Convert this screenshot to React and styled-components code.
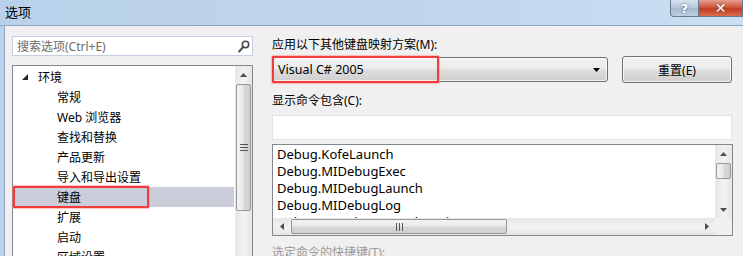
import React from 'react'
import styled, { createGlobalStyle } from 'styled-components'

const GlobalStyle = createGlobalStyle`
  html, body {
    margin: 0;
    padding: 0;
    background: #f0f0f0;
  }
  body {
    font-family: "Noto Sans", "Noto Sans CJK SC", sans-serif;
    font-size: 12px;
    color: #000;
  }
`

const FONT = `"Noto Sans", "Noto Sans CJK SC", sans-serif`

const Window = styled.div`
  width: 743px;
  height: 256px;
  overflow: hidden;
  display: flex;
  flex-direction: column;
  background: linear-gradient(90deg, #b9d1ea 0%, #c0d6ec 60%, #cadff2 100%);
`

const TitleBar = styled.div`
  height: 25px;
  flex: none;
  display: flex;
  align-items: flex-start;
  justify-content: space-between;
  border-bottom: 1px solid #8fa4bd;
`

const Title = styled.div`
  font-family: "Noto Sans CJK SC", sans-serif;
  font-size: 13px;
  line-height: 17px;
  padding: 3px 0 0 5px;
  color: #000;
`

const Captions = styled.div`
  display: flex;
  height: 17px;
`

const CaptionButton = styled.div`
  height: 16px;
  width: ${p => p.$width}px;
  display: flex;
  align-items: center;
  justify-content: center;
  border: 1px solid #6a7a8e;
  border-top: none;
  color: #fff;
  font-family: "DejaVu Sans", sans-serif;
  font-weight: bold;
  font-size: ${p => p.$danger ? 14 : 13}px;
  background: ${p => p.$danger
    ? 'linear-gradient(180deg, #e3a08f 0%, #d0573f 45%, #c23a1f 55%, #d86d51 100%)'
    : 'linear-gradient(180deg, #d6e2ee 0%, #b9c9db 45%, #a5b8cd 55%, #bfd0e2 100%)'};
  border-radius: ${p => p.$first ? '0 0 0 4px' : '0'};
  border-left: ${p => p.$first ? '1px solid #6a7a8e' : 'none'};
  text-shadow: 0 0 2px #3a4a60;
`

const Body = styled.div`
  flex: 1;
  margin-left: 4px;
  border-left: 1px solid #8fa4bd;
  background: #f0f0f0;
  display: flex;
  gap: 19px;
  padding: 10px 10px 0 7px;
  min-height: 0;
`

const LeftPane = styled.div`
  width: 241px;
  flex: none;
  display: flex;
  flex-direction: column;
  gap: 9px;
`

const SearchBox = styled.div`
  height: 20px;
  flex: none;
  box-sizing: border-box;
  border: 1px solid #c5cde0;
  background: #fff;
  display: flex;
  align-items: center;
  justify-content: space-between;
  padding: 0 2px 0 4px;
`

const Placeholder = styled.span`
  color: #6d6d6d;
  font-size: 12px;
`

const TreeBox = styled.div`
  flex: 1;
  border: 1px solid #828790;
  border-bottom: none;
  background: #fff;
  display: flex;
`

const TreeList = styled.div`
  flex: 1;
  padding: 1px 1px 0 1px;
  display: flex;
  flex-direction: column;
`

const TreeRow = styled.div`
  position: relative;
  height: 20px;
  flex: none;
  display: flex;
  align-items: center;
  padding-left: ${p => p.$level === 0 ? 8 : 43}px;
  background: ${p => p.$selected ? '#cbcdda' : 'transparent'};
  font-family: ${FONT};
  white-space: nowrap;
`

const Expander = styled.span`
  width: 16px;
  display: inline-flex;
  align-items: center;
  justify-content: flex-start;
`

const RedMark = styled.div`
  position: absolute;
  left: ${p => p.$left}px;
  top: ${p => p.$top}px;
  width: ${p => p.$width}px;
  height: ${p => p.$height}px;
  box-sizing: border-box;
  border: 2px solid #f23b3b;
  border-radius: 1px;
  box-shadow: 0 0 1px 1px rgba(255, 120, 120, 0.45);
  pointer-events: none;
`

const VScroll = styled.div`
  width: 17px;
  flex: none;
  display: flex;
  flex-direction: column;
  align-items: center;
  background: linear-gradient(90deg, #e6e6e6, #f2f2f2 50%, #e6e6e6);
`

const HScroll = styled.div`
  height: 17px;
  display: flex;
  align-items: center;
  background: linear-gradient(180deg, #e6e6e6, #f2f2f2 50%, #e6e6e6);
`

const ArrowCell = styled.div`
  width: ${p => p.$horizontal ? 17 : 15}px;
  height: ${p => p.$horizontal ? 15 : 17}px;
  flex: none;
  display: flex;
  align-items: center;
  justify-content: center;
`

const Thumb = styled.div`
  flex: none;
  box-sizing: border-box;
  border: 1px solid #979797;
  border-radius: 2px;
  display: flex;
  align-items: center;
  justify-content: center;
  width: ${p => p.$horizontal ? `${p.$size}px` : '15px'};
  height: ${p => p.$horizontal ? '15px' : `${p.$size}px`};
  margin: ${p => p.$horizontal ? '0 0 0 1px' : '1px 0 0 0'};
  background: ${p => p.$horizontal
    ? 'linear-gradient(180deg, #f3f3f3 0%, #e9e9e9 45%, #d8d8d8 55%, #cfcfcf 100%)'
    : 'linear-gradient(90deg, #f3f3f3 0%, #e9e9e9 45%, #d8d8d8 55%, #cfcfcf 100%)'};
`

const Track = styled.div`
  flex: 1;
`

const RightPane = styled.div`
  width: 461px;
  flex: none;
  display: flex;
  flex-direction: column;
`

const FieldLabel = styled.div`
  flex: none;
  height: 18px;
  line-height: 18px;
  margin-top: ${p => p.$gap || 0}px;
  color: ${p => p.$disabled ? '#9a9a9a' : '#000'};
  font-family: ${FONT};
  white-space: nowrap;
`

const ComboRow = styled.div`
  flex: none;
  display: flex;
  align-items: center;
  gap: 14px;
  margin-top: 2px;
  height: 27px;
`

const chrome = `
  box-sizing: border-box;
  border: 1px solid #707070;
  border-radius: 3px;
  background: linear-gradient(180deg, #f2f2f2 0%, #ebebeb 48%, #dddddd 52%, #cfcfcf 100%);
  box-shadow: inset 0 0 0 1px rgba(255,255,255,0.7);
`

const Combo = styled.div`
  ${chrome}
  position: relative;
  width: 336px;
  height: 25px;
  display: flex;
  align-items: center;
  justify-content: space-between;
  padding: 0 7px 0 5px;
  font-family: ${FONT};
  font-size: 12.5px;
`

const Button = styled.div`
  ${chrome}
  width: 110px;
  height: 27px;
  display: flex;
  align-items: center;
  justify-content: center;
  font-family: ${FONT};
`

const TextInput = styled.div`
  flex: none;
  margin-top: 5px;
  height: 25px;
  width: 460px;
  box-sizing: border-box;
  background: #fff;
  border: 1px solid #e2e3ea;
  border-bottom-color: #dfe3ea;
`

const ListBox = styled.div`
  flex: none;
  margin-top: 4px;
  height: 92px;
  box-sizing: border-box;
  border: 1px solid #828790;
  background: #fff;
  display: grid;
  grid-template-columns: 1fr 17px;
  grid-template-rows: 1fr 17px;
`

const ListItems = styled.div`
  padding: 1px 0 0 4px;
  overflow: hidden;
`

const ListItem = styled.div`
  height: 17px;
  line-height: 17px;
  font-family: ${FONT};
  font-size: 13px;
  white-space: nowrap;
`

const Corner = styled.div`
  background: #f0f0f0;
`

const Tri = ({ dir, color = '#4d4d4d' }) => {
  const pts = {
    up: '0,4 3.5,0 7,4',
    down: '0,0 7,0 3.5,4',
    left: '4,0 4,7 0,3.5',
    right: '0,0 0,7 4,3.5',
  }[dir]
  const horizontal = dir === 'left' || dir === 'right'
  return (
    <svg width={horizontal ? 4 : 7} height={horizontal ? 7 : 4} viewBox={horizontal ? '0 0 4 7' : '0 0 7 4'}>
      <polygon points={pts} fill={color} />
    </svg>
  )
}

const Grip = ({ horizontal }) => (
  <svg width={horizontal ? 7 : 8} height={horizontal ? 8 : 7}>
    {[0, 3, 6].map(o => horizontal
      ? <rect key={o} x={o} y={0} width={1} height={8} fill="#555" />
      : <rect key={o} x={0} y={o} width={8} height={1} fill="#555" />)}
  </svg>
)

const SearchIcon = () => (
  <svg width="12" height="13" viewBox="0 0 12 13">
    <circle cx="7.5" cy="4.5" r="3.2" fill="none" stroke="#4a4a4a" strokeWidth="1.6" />
    <line x1="5.2" y1="7" x2="1.2" y2="11.5" stroke="#4a4a4a" strokeWidth="2" strokeLinecap="round" />
  </svg>
)

const ExpandedGlyph = () => (
  <svg width="6" height="6" viewBox="0 0 6 6">
    <polygon points="6,0 6,6 0,6" fill="#262626" />
  </svg>
)

const treeItems = [
  { label: '环境', level: 0 },
  { label: '常规', level: 1 },
  { label: 'Web 浏览器', level: 1 },
  { label: '查找和替换', level: 1 },
  { label: '产品更新', level: 1 },
  { label: '导入和导出设置', level: 1 },
  { label: '键盘', level: 1, selected: true },
  { label: '扩展', level: 1 },
  { label: '启动', level: 1 },
  { label: '区域设置', level: 1 },
]

const commands = [
  'Debug.KofeLaunch',
  'Debug.MIDebugExec',
  'Debug.MIDebugLaunch',
  'Debug.MIDebugLog',
  'Debug.MIDebugLaunchOptions',
]

export default function App() {
  return (
    <>
      <GlobalStyle />
      <Window>
        <TitleBar>
          <Title>选项</Title>
          <Captions>
            <CaptionButton $width={27} $first>?</CaptionButton>
            <CaptionButton $width={43} $danger>✕</CaptionButton>
          </Captions>
        </TitleBar>

        <Body>
          <LeftPane>
            <SearchBox>
              <Placeholder>搜索选项(Ctrl+E)</Placeholder>
              <SearchIcon />
            </SearchBox>
            <TreeBox>
              <TreeList>
                {treeItems.map(item => (
                  <TreeRow key={item.label} $level={item.level} $selected={item.selected}>
                    {item.level === 0 && <Expander><ExpandedGlyph /></Expander>}
                    {item.label}
                    {item.selected && <RedMark $left={-1} $top={-1} $width={136} $height={22} />}
                  </TreeRow>
                ))}
              </TreeList>
              <VScroll>
                <ArrowCell><Tri dir="up" /></ArrowCell>
                <Thumb $size={127}><Grip /></Thumb>
                <Track />
              </VScroll>
            </TreeBox>
          </LeftPane>

          <RightPane>
            <FieldLabel>应用以下其他键盘映射方案(M):</FieldLabel>
            <ComboRow>
              <Combo>
                <span>Visual C# 2005</span>
                <Tri dir="down" color="#000" />
                <RedMark $left={-1} $top={-2} $width={167} $height={27} />
              </Combo>
              <Button>重置(E)</Button>
            </ComboRow>
            <FieldLabel $gap={9}>显示命令包含(C):</FieldLabel>
            <TextInput />
            <ListBox>
              <ListItems>
                {commands.map(c => <ListItem key={c}>{c}</ListItem>)}
              </ListItems>
              <VScroll>
                <ArrowCell><Tri dir="up" /></ArrowCell>
                <Thumb $size={16}><span /></Thumb>
                <Track />
                <ArrowCell><Tri dir="down" /></ArrowCell>
              </VScroll>
              <HScroll>
                <ArrowCell $horizontal><Tri dir="left" /></ArrowCell>
                <Thumb $horizontal $size={216}><Grip horizontal /></Thumb>
                <Track />
                <ArrowCell $horizontal><Tri dir="right" /></ArrowCell>
              </HScroll>
              <Corner />
            </ListBox>
            <FieldLabel $gap={8} $disabled>选定命令的快捷键(T):</FieldLabel>
          </RightPane>
        </Body>
      </Window>
    </>
  )
}
